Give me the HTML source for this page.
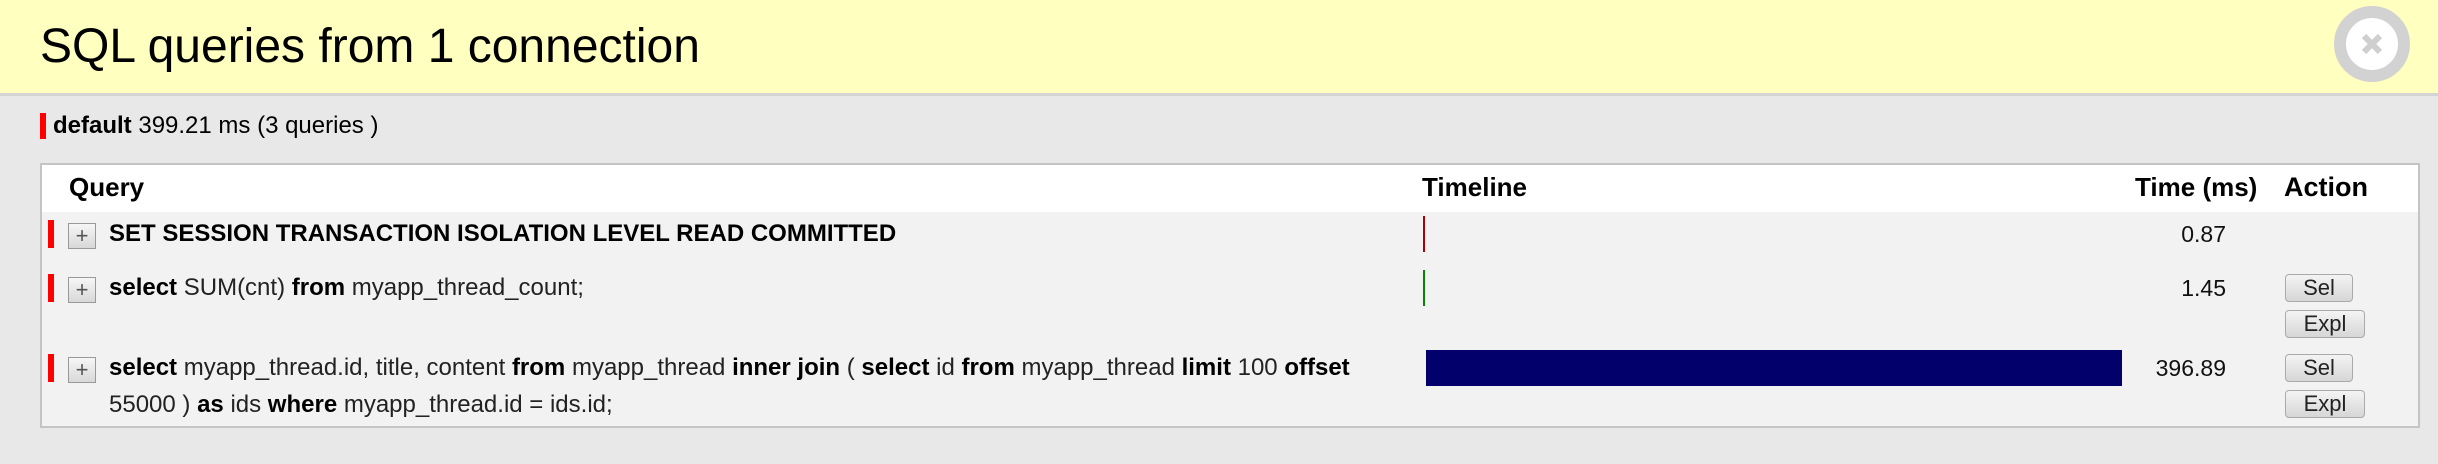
<!DOCTYPE html>
<html><head><meta charset="utf-8"><style>
*{margin:0;padding:0;box-sizing:border-box}
body{width:2438px;height:464px;background:#e8e8e8;font-family:"Liberation Sans",Arial,sans-serif;color:#000;position:relative;overflow:hidden}
.a{position:absolute;white-space:nowrap}
#hd{left:0;top:0;width:2438px;height:96px;background:#ffffc0;border-bottom:3px solid #d4d4d4}
.rb{position:absolute;width:6px;background:#f00}
.pl{position:absolute;width:28px;height:26px;border:1px solid #999;background:linear-gradient(#f6f6f6,#d8d8d8);color:#555;font-size:22px;line-height:24px;text-align:center}
.q{font-size:24px;color:#222}
.q b{color:#000}
.btn{position:absolute;height:28px;border:1px solid #aaa;border-radius:4px;background:linear-gradient(#f4f4f4,#d6d6d6);font-size:22px;line-height:26px;text-align:center;color:#222}
.n{font-size:23px;text-align:right;width:120px;color:#111}
.h{font-weight:bold;line-height:30px;top:172px}
</style></head><body>
<div id="hd" class="a"></div>
<div class="a" style="left:40px;top:19px;font-size:48px;line-height:56px">SQL queries from 1 connection</div>
<div class="a" style="left:2334px;top:6px;width:76px;height:76px;border-radius:50%;border:12px solid #d2d2d2;background:#fff"></div>
<svg class="a" style="left:2361px;top:33px" width="22" height="22"><path d="M3 3L19 19M19 3L3 19" stroke="#cfcfcf" stroke-width="6"/></svg>

<div class="rb" style="left:40px;top:113px;height:26px"></div>
<div class="a" style="left:53px;top:113px;font-size:24px;line-height:26px"><b>default</b> 399.21 ms (3 queries )</div>

<div class="a" style="left:40px;top:163px;width:2380px;height:265px;border:2px solid #c4c4c4;background:#f2f2f2"></div>
<div class="a" style="left:42px;top:165px;width:2376px;height:47px;background:#fff"></div>
<div class="a h" style="left:69px;font-size:26px">Query</div>
<div class="a h" style="left:1422px;font-size:26px">Timeline</div>
<div class="a h" style="left:2135px;font-size:26px">Time (ms)</div>
<div class="a h" style="left:2284px;font-size:27px">Action</div>

<div class="rb" style="left:48px;top:220px;height:28px"></div>
<div class="pl" style="left:68px;top:223px">+</div>
<div class="a q" style="left:109px;top:220px;line-height:28px"><b>SET SESSION TRANSACTION ISOLATION LEVEL READ COMMITTED</b></div>
<div class="a" style="left:1423px;top:216px;width:2px;height:36px;background:#a00"></div>
<div class="a n" style="left:2106px;top:220px;line-height:28px">0.87</div>

<div class="rb" style="left:48px;top:274px;height:28px"></div>
<div class="pl" style="left:68px;top:277px">+</div>
<div class="a q" style="left:109px;top:274px;line-height:28px"><b>select</b> SUM(cnt) <b>from</b> myapp_thread_count;</div>
<div class="a" style="left:1423px;top:270px;width:2px;height:36px;background:#080"></div>
<div class="a n" style="left:2106px;top:274px;line-height:28px">1.45</div>
<div class="btn" style="left:2285px;top:274px;width:68px">Sel</div>
<div class="btn" style="left:2285px;top:310px;width:80px">Expl</div>

<div class="rb" style="left:48px;top:354px;height:28px"></div>
<div class="pl" style="left:68px;top:357px">+</div>
<div class="a q" style="left:109px;top:354px;line-height:28px"><b>select</b> myapp_thread.id, title, content <b>from</b> myapp_thread <b>inner join</b> ( <b>select</b> id <b>from</b> myapp_thread <b>limit</b> 100 <b>offset</b></div>
<div class="a q" style="left:109px;top:391px;line-height:28px">55000 ) <b>as</b> ids <b>where</b> myapp_thread.id = ids.id;</div>
<div class="a" style="left:1426px;top:350px;width:696px;height:36px;background:#02006b"></div>
<div class="a n" style="left:2106px;top:354px;line-height:28px">396.89</div>
<div class="btn" style="left:2285px;top:354px;width:68px">Sel</div>
<div class="btn" style="left:2285px;top:390px;width:80px">Expl</div>
</body></html>
